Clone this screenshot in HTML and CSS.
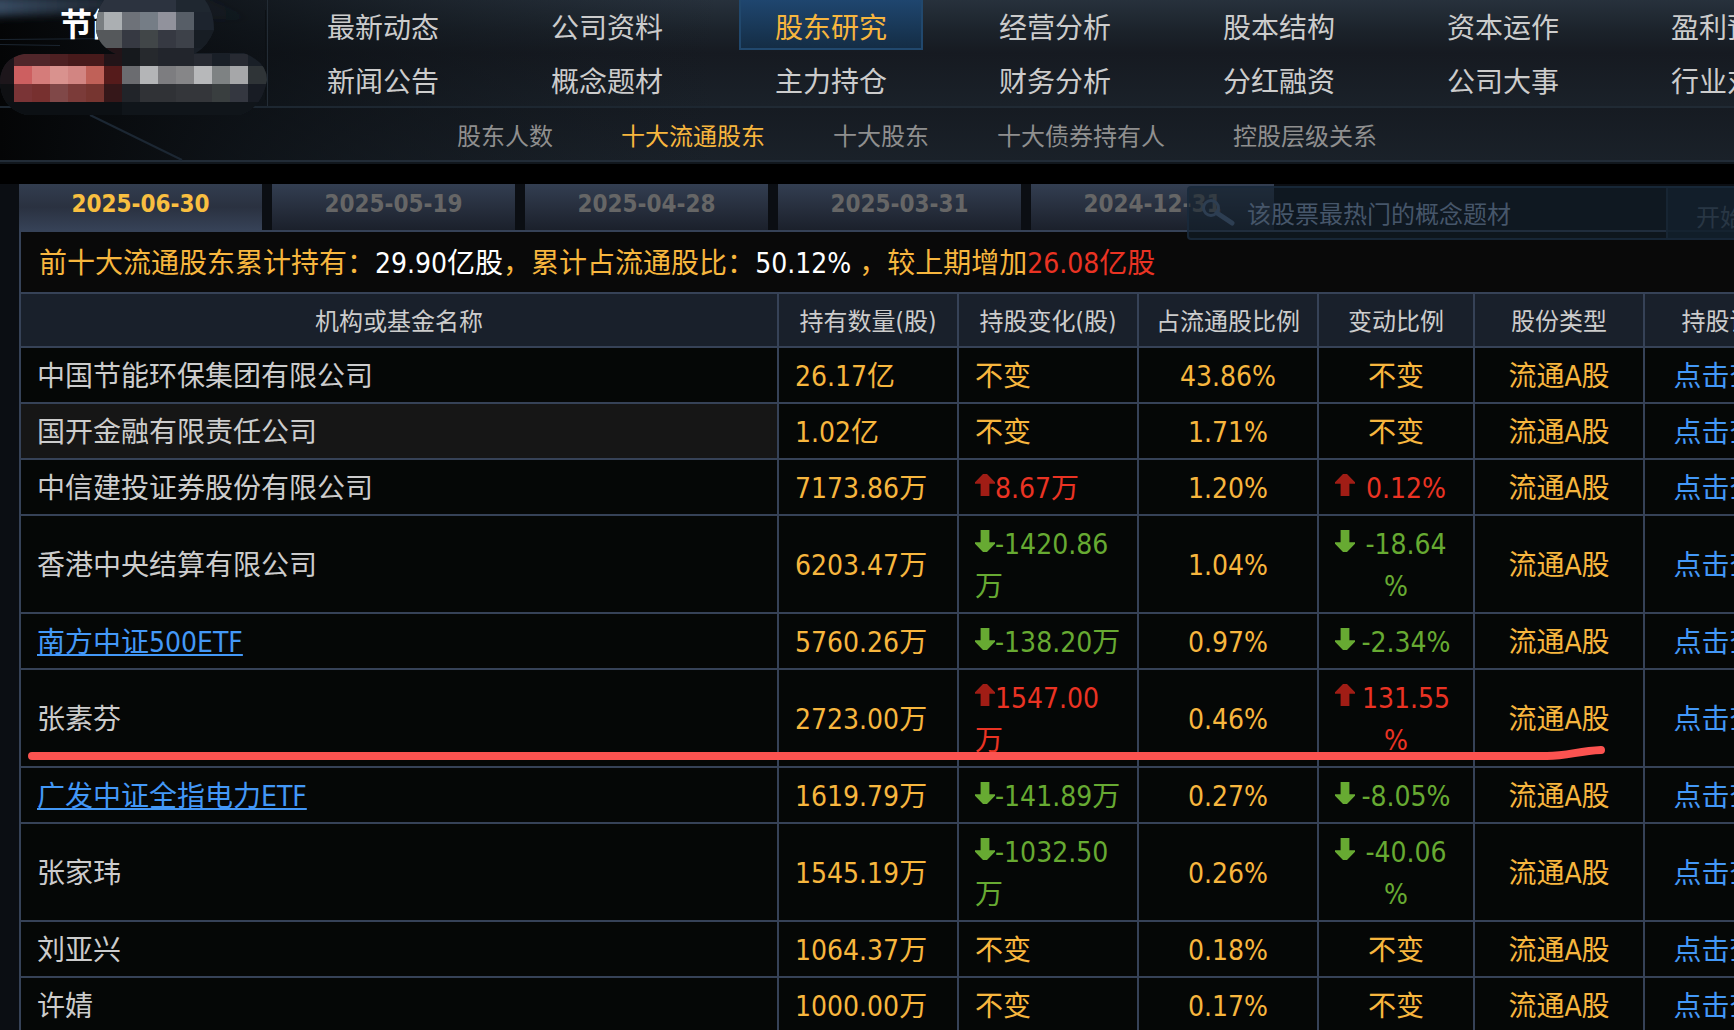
FILE: index.html
```html
<!DOCTYPE html>
<html lang="zh-CN">
<head>
  <meta charset="UTF-8">
  <meta name="viewport" content="width=device-width, initial-scale=1.0">
  <title>股东研究 - 十大流通股东</title>
  <link rel="stylesheet" href="styles.css">
</head>
<body>
<div class="page">
  <header class="header">
    <div class="stock">
      <!-- 背景光线 -->
      <svg class="header-bg" width="720" height="162" aria-hidden="true">
        <defs>
          <linearGradient id="fade" x1="0" y1="0" x2="1" y2="0">
            <stop offset="0" stop-color="#040506"/>
            <stop offset="0.35" stop-color="#0a0e12" stop-opacity="0.7"/>
            <stop offset="1" stop-color="#12181e" stop-opacity="0"/>
          </linearGradient>
          <linearGradient id="glow" x1="0" y1="0" x2="1" y2="0">
            <stop offset="0" stop-color="#3a4e66"/>
            <stop offset="1" stop-color="#202a36" stop-opacity="0"/>
          </linearGradient>
          <filter id="soft"><feGaussianBlur stdDeviation="4"/></filter>
        </defs>
        <rect width="720" height="160" fill="url(#fade)"/>
        <path d="M-10 -4L200 -4L260 22L120 12L-10 16Z" fill="url(#glow)" filter="url(#soft)"/>
        <path d="M0 39.500L110 38.500M0 44.500L60 45.500" stroke="#1b2530" fill="none"/>
        <path d="M0 107H720" stroke="#1d2731" stroke-width="2"/>
        <path d="M90 115L182 160" stroke="#1c2733" stroke-width="2" fill="none"/>
        <path d="M267.500 0V106" stroke="#232c35"/>
        <path d="M265.500 10V100" stroke="#0c1014"/>
      </svg>
      <span class="stock-name">节能</span>
      <svg class="mosaic" width="267" height="118" aria-hidden="true">
        <defs>
          <clipPath id="blob">
            <path d="M104 0H205Q214 12 214 30Q208 46 196 53H244Q267 62 267 80Q262 108 240 115H26Q0 108 0 80Q2 58 24 54H116Q98 46 96 30Q96 10 104 0Z"/>
          </clipPath>
        </defs>
        <g clip-path="url(#blob)">
          <rect width="267" height="118" fill="#191f27"/>
          <path fill="#2c333f" d="M90 0h86v12h-86z"/>
          <path fill="#1f2730" d="M176 0h40v12h-40z"/>
          <path fill="#797e81" d="M90 12h14v18h-14z"/>
          <path fill="#abafb2" d="M104 12h18v18h-18z"/>
          <path fill="#6e7279" d="M122 12h18v18h-18z"/>
          <path fill="#757d86" d="M140 12h18v18h-18z"/>
          <path fill="#91929c" d="M158 12h18v18h-18z"/>
          <path fill="#575e67" d="M176 12h18v18h-18z"/>
          <path fill="#1d242e" d="M194 12h20v18h-20z"/>
          <path fill="#55585b" d="M90 30h32v18h-32z"/>
          <path fill="#363942" d="M122 30h18v18h-18z"/>
          <path fill="#414648" d="M140 30h18v18h-18z"/>
          <path fill="#363942" d="M158 30h18v18h-18z"/>
          <path fill="#3d4149" d="M176 30h18v18h-18z"/>
          <path fill="#171d24" d="M194 30h20v18h-20z"/>
          <path fill="#221418" d="M104 48h18v18h-18z"/>
          <path fill="#16191d" d="M122 48h18v18h-18z"/>
          <path fill="#26292d" d="M140 48h18v18h-18z"/>
          <path fill="#22252c" d="M158 48h36v18h-36z"/>
          <path fill="#272a32" d="M194 54h18v12h-18zM230 54h18v12h-18z"/>
          <path fill="#50262a" d="M14 54h36v12h-36z"/>
          <path fill="#4d2022" d="M50 54h18v12h-18z"/>
          <path fill="#471a1b" d="M68 54h36v12h-36z"/>
          <path fill="#1d161b" d="M0 54h14v30h-14z"/>
          <path fill="#cd5f60" d="M14 66h18v18h-18z"/>
          <path fill="#d57c7a" d="M32 66h18v18h-18z"/>
          <path fill="#d9928e" d="M50 66h18v18h-18z"/>
          <path fill="#d28582" d="M68 66h18v18h-18z"/>
          <path fill="#c06158" d="M86 66h18v18h-18z"/>
          <path fill="#551b1b" d="M104 66h18v18h-18z"/>
          <path fill="#6b6c70" d="M122 66h18v18h-18z"/>
          <path fill="#b4b5b7" d="M140 66h18v18h-18z"/>
          <path fill="#7d7d80" d="M158 66h18v18h-18z"/>
          <path fill="#868688" d="M176 66h18v18h-18z"/>
          <path fill="#b7b8ba" d="M194 66h18v18h-18z"/>
          <path fill="#7e8283" d="M212 66h18v18h-18z"/>
          <path fill="#a6a7a9" d="M230 66h18v18h-18z"/>
          <path fill="#2f3437" d="M248 66h19v18h-19z"/>
          <path fill="#0f1013" d="M0 84h14v18h-14z"/>
          <path fill="#7a3436" d="M14 84h18v18h-18z"/>
          <path fill="#77302f" d="M32 84h18v18h-18z"/>
          <path fill="#804848" d="M50 84h18v18h-18z"/>
          <path fill="#7b3b39" d="M68 84h18v18h-18z"/>
          <path fill="#763530" d="M86 84h18v18h-18z"/>
          <path fill="#351719" d="M104 84h18v18h-18z"/>
          <path fill="#212429" d="M122 84h18v18h-18z"/>
          <path fill="#303236" d="M140 84h36v18h-36z"/>
          <path fill="#34363a" d="M176 84h36v18h-36z"/>
          <path fill="#393e3f" d="M212 84h18v18h-18z"/>
          <path fill="#343740" d="M230 84h18v18h-18z"/>
          <path fill="#181c24" d="M248 84h19v18h-19z"/>
          <path fill="#0c1014" d="M0 102h122v14h-122z"/>
          <path fill="#10151a" d="M122 102h145v14h-145z"/>
        </g>
      </svg>
    </div>
    <nav class="menu">
      <a href="#">最新动态</a>
      <a href="#">公司资料</a>
      <a href="#" class="active">股东研究</a>
      <a href="#">经营分析</a>
      <a href="#">股本结构</a>
      <a href="#">资本运作</a>
      <a href="#">盈利预测</a>
      <a href="#">新闻公告</a>
      <a href="#">概念题材</a>
      <a href="#">主力持仓</a>
      <a href="#">财务分析</a>
      <a href="#">分红融资</a>
      <a href="#">公司大事</a>
      <a href="#">行业对比</a>
    </nav>
    <nav class="submenu">
      <a href="#">股东人数</a>
      <a href="#" class="active">十大流通股东</a>
      <a href="#">十大股东</a>
      <a href="#">十大债券持有人</a>
      <a href="#">控股层级关系</a>
    </nav>
  </header>

  <main class="content">
    <div class="tabs">
      <button type="button" class="active">2025-06-30</button>
      <button type="button">2025-05-19</button>
      <button type="button">2025-04-28</button>
      <button type="button">2025-03-31</button>
      <button type="button">2024-12-31</button>
    </div>

    <form class="search">
      <svg width="34" height="28" viewBox="0 0 34 28" aria-hidden="true">
        <circle cx="10" cy="9" r="7.500" fill="none" stroke="#2d3e52" stroke-width="3"/>
        <path d="M16 14L31 24" stroke="#2d3e52" stroke-width="5" stroke-linecap="round"/>
      </svg>
      <input type="text" placeholder="该股票最热门的概念题材" aria-label="搜索">
      <button type="button">开始搜索</button>
    </form>

    <section class="panel">
      <p class="summary">前十大流通股东累计持有：<b>29.90亿股</b>，累计占流通股比：<b>50.12%</b> ，较上期增加<b class="up">26.08亿股</b></p>
      <table>
        <colgroup>
          <col>
          <col class="w-num">
          <col class="w-num">
          <col class="w-num">
          <col class="w-ratio">
          <col class="w-type">
          <col class="w-type">
        </colgroup>
        <thead>
          <tr>
            <th>机构或基金名称</th>
            <th>持有数量(股)</th>
            <th>持股变化(股)</th>
            <th>占流通股比例</th>
            <th>变动比例</th>
            <th>股份类型</th>
            <th>持股详情</th>
          </tr>
        </thead>
        <tbody>
          <tr>
            <td class="name">中国节能环保集团有限公司</td>
            <td class="num">26.17亿</td>
            <td class="num">不变</td>
            <td>43.86%</td>
            <td>不变</td>
            <td>流通A股</td>
            <td><a href="#">点击查看</a></td>
          </tr>
          <tr>
            <td class="name hover">国开金融有限责任公司</td>
            <td class="num">1.02亿</td>
            <td class="num">不变</td>
            <td>1.71%</td>
            <td>不变</td>
            <td>流通A股</td>
            <td><a href="#">点击查看</a></td>
          </tr>
          <tr>
            <td class="name">中信建投证券股份有限公司</td>
            <td class="num">7173.86万</td>
            <td class="num up"><i class="arrow"></i>8.67万</td>
            <td>1.20%</td>
            <td class="up"><i class="arrow"></i>0.12%</td>
            <td>流通A股</td>
            <td><a href="#">点击查看</a></td>
          </tr>
          <tr>
            <td class="name">香港中央结算有限公司</td>
            <td class="num">6203.47万</td>
            <td class="num down"><i class="arrow"></i>-1420.86万</td>
            <td>1.04%</td>
            <td class="down"><i class="arrow"></i>-18.64%</td>
            <td>流通A股</td>
            <td><a href="#">点击查看</a></td>
          </tr>
          <tr>
            <td class="name"><a href="#">南方中证500ETF</a></td>
            <td class="num">5760.26万</td>
            <td class="num down"><i class="arrow"></i>-138.20万</td>
            <td>0.97%</td>
            <td class="down"><i class="arrow"></i>-2.34%</td>
            <td>流通A股</td>
            <td><a href="#">点击查看</a></td>
          </tr>
          <tr>
            <td class="name marked">张素芬
              <svg class="mark" width="1580" height="20" aria-hidden="true">
                <path d="M4 12H1519C1540 12 1550 7 1573 6" fill="none" stroke="#fb5350" stroke-width="8" stroke-linecap="round"/>
              </svg>
            </td>
            <td class="num">2723.00万</td>
            <td class="num up"><i class="arrow"></i>1547.00万</td>
            <td>0.46%</td>
            <td class="up"><i class="arrow"></i>131.55%</td>
            <td>流通A股</td>
            <td><a href="#">点击查看</a></td>
          </tr>
          <tr>
            <td class="name"><a href="#">广发中证全指电力ETF</a></td>
            <td class="num">1619.79万</td>
            <td class="num down"><i class="arrow"></i>-141.89万</td>
            <td>0.27%</td>
            <td class="down"><i class="arrow"></i>-8.05%</td>
            <td>流通A股</td>
            <td><a href="#">点击查看</a></td>
          </tr>
          <tr>
            <td class="name">张家玮</td>
            <td class="num">1545.19万</td>
            <td class="num down"><i class="arrow"></i>-1032.50万</td>
            <td>0.26%</td>
            <td class="down"><i class="arrow"></i>-40.06%</td>
            <td>流通A股</td>
            <td><a href="#">点击查看</a></td>
          </tr>
          <tr>
            <td class="name">刘亚兴</td>
            <td class="num">1064.37万</td>
            <td class="num">不变</td>
            <td>0.18%</td>
            <td>不变</td>
            <td>流通A股</td>
            <td><a href="#">点击查看</a></td>
          </tr>
          <tr>
            <td class="name">许婧</td>
            <td class="num">1000.00万</td>
            <td class="num">不变</td>
            <td>0.17%</td>
            <td>不变</td>
            <td>流通A股</td>
            <td><a href="#">点击查看</a></td>
          </tr>
        </tbody>
      </table>
    </section>
  </main>
</div>
</body>
</html>
```
FILE: styles.css
```css
* {
  margin: 0;
  padding: 0;
  box-sizing: border-box;
}
:root {
  --line: #364257;
  --gold: #f7b63e;
  --text: #cccccc;
  --red: #ea3323;
  --green: #67aa32;
  --blue: #4398f7;
}
html {
  overflow: hidden;
}
body {
  background: #0b0e13;
  color: var(--text);
  font-family: "DejaVu Sans Condensed", "Noto Sans CJK SC", sans-serif;
  font-size: 28px;
}
a {
  color: inherit;
  text-decoration: none;
}
button,
input {
  border: 0;
  background: none;
  font-family: inherit;
}

/* the layout keeps its desktop width on narrow windows */
.page {
  min-width: 1836px;
}

/* header */
.header {
  position: relative;
  border-bottom: 2px solid #11171d;
}
.stock {
  position: absolute;
  top: 0;
  left: 0;
}
.header-bg,
.mosaic {
  position: absolute;
  top: 0;
  left: 0;
}
.stock-name {
  position: relative;
  display: block;
  padding-left: 60px;
  color: #fff;
  font-size: 32px;
  font-weight: bold;
  line-height: 50px;
}
.menu {
  display: grid;
  grid-template-columns: repeat(7, 184px);
  column-gap: 40px;
  row-gap: 4px;
  padding: 0 0 2px 291px;
  border-bottom: 2px solid #202a34;
  background: linear-gradient(#27313c, #1b222a 30%, #161a21 50%, #1a2129);
}
.menu a {
  position: relative;
  height: 50px;
  line-height: 58px;
  text-align: center;
}
.menu .active {
  border: 2px solid #21486d;
  border-top: 0;
  background: linear-gradient(#1f466f, #142d45);
  color: var(--gold);
}
.submenu {
  display: flex;
  gap: 68px;
  padding: 6px 0 0 457px;
  border-bottom: 2px solid #222c37;
  background: linear-gradient(#161b22, #1a2129);
  color: #8f8f8f;
  font-size: 24px;
  line-height: 46px;
}
.submenu a {
  position: relative;
}
.submenu .active {
  color: var(--gold);
}

/* content */
.content {
  position: relative;
  padding: 0 20px 0 19px;
  border-top: 20px solid #000;
}
.tabs {
  display: flex;
  gap: 10px;
}
.tabs button {
  width: 243px;
  height: 46px;
  padding-bottom: 6px;
  background: linear-gradient(#333e51, #1b202b);
  color: #666;
  font-size: 24px;
  font-weight: bold;
}
.tabs .active {
  background: linear-gradient(#323d4f, #2a3140 50%, #364257);
  color: #f9bf40;
}

/* floating search bar */
.search {
  position: absolute;
  top: 2px;
  right: 0;
  left: 1187px;
  display: flex;
  align-items: center;
  height: 54px;
  padding-left: 12px;
  border: 2px solid #1a2c3dcc;
  border-radius: 4px;
  background: #13202c99;
}
.search input {
  flex: 1;
  min-width: 0;
  padding: 4px 0 0 12px;
  color: #46566a;
  font-size: 24px;
}
.search input::placeholder {
  color: #46566a;
}
.search button {
  align-self: stretch;
  width: 168px;
  padding: 4px 0 0 28px;
  border-left: 2px solid #172533;
  background: #13202dcc;
  color: #283644;
  font-size: 24px;
  text-align: left;
}

/* shareholders */
.panel {
  border: 2px solid var(--line);
  background: #090909;
}
.summary {
  padding: 11px 18px 7px;
  color: var(--gold);
  line-height: 42px;
}
.summary b {
  color: #fff;
  font-weight: normal;
}
.summary .up {
  color: var(--red);
}
table {
  width: 100%;
  border-collapse: collapse;
  table-layout: fixed;
}
.w-num {
  width: 180px;
}
.w-ratio {
  width: 156px;
}
.w-type {
  width: 170px;
}
th,
td {
  border: 2px solid var(--line);
  line-height: 42px;
}
th:first-child,
td:first-child {
  border-left: 0;
}
th:last-child,
td:last-child {
  border-right: 0;
}
th {
  padding: 8px 0 4px;
  background: #19202b;
  font-size: 24px;
  font-weight: normal;
  line-height: 40px;
}
td {
  padding: 8px 16px 4px;
  background: #050706;
  color: var(--gold);
  text-align: center;
  word-break: break-all;
  line-break: anywhere;
}
td a {
  color: var(--blue);
}
td.name {
  color: var(--text);
  text-align: left;
}
td.hover {
  background: #161616;
}
td.name a {
  text-decoration: underline;
  text-decoration-thickness: 2px;
  text-underline-offset: 2px;
}
td.num {
  text-align: left;
}
td.up {
  color: var(--red);
}
td.down {
  color: var(--green);
}
.arrow {
  float: left;
  width: 20px;
  height: 22px;
  margin-top: 6px;
  background: var(--green);
  clip-path: polygon(28% 0, 72% 0, 72% 56%, 100% 56%, 100% 62%, 60% 100%, 40% 100%, 0 62%, 0 56%, 28% 56%);
}
.up .arrow {
  background: #a01d15;
  clip-path: polygon(40% 0, 60% 0, 100% 38%, 100% 44%, 72% 44%, 72% 100%, 28% 100%, 28% 44%, 0 44%, 0 38%);
}

/* red marker stroke under the row */
td.marked {
  position: relative;
}
.mark {
  position: absolute;
  bottom: 2px;
  left: 7px;
  z-index: 1;
}
```
